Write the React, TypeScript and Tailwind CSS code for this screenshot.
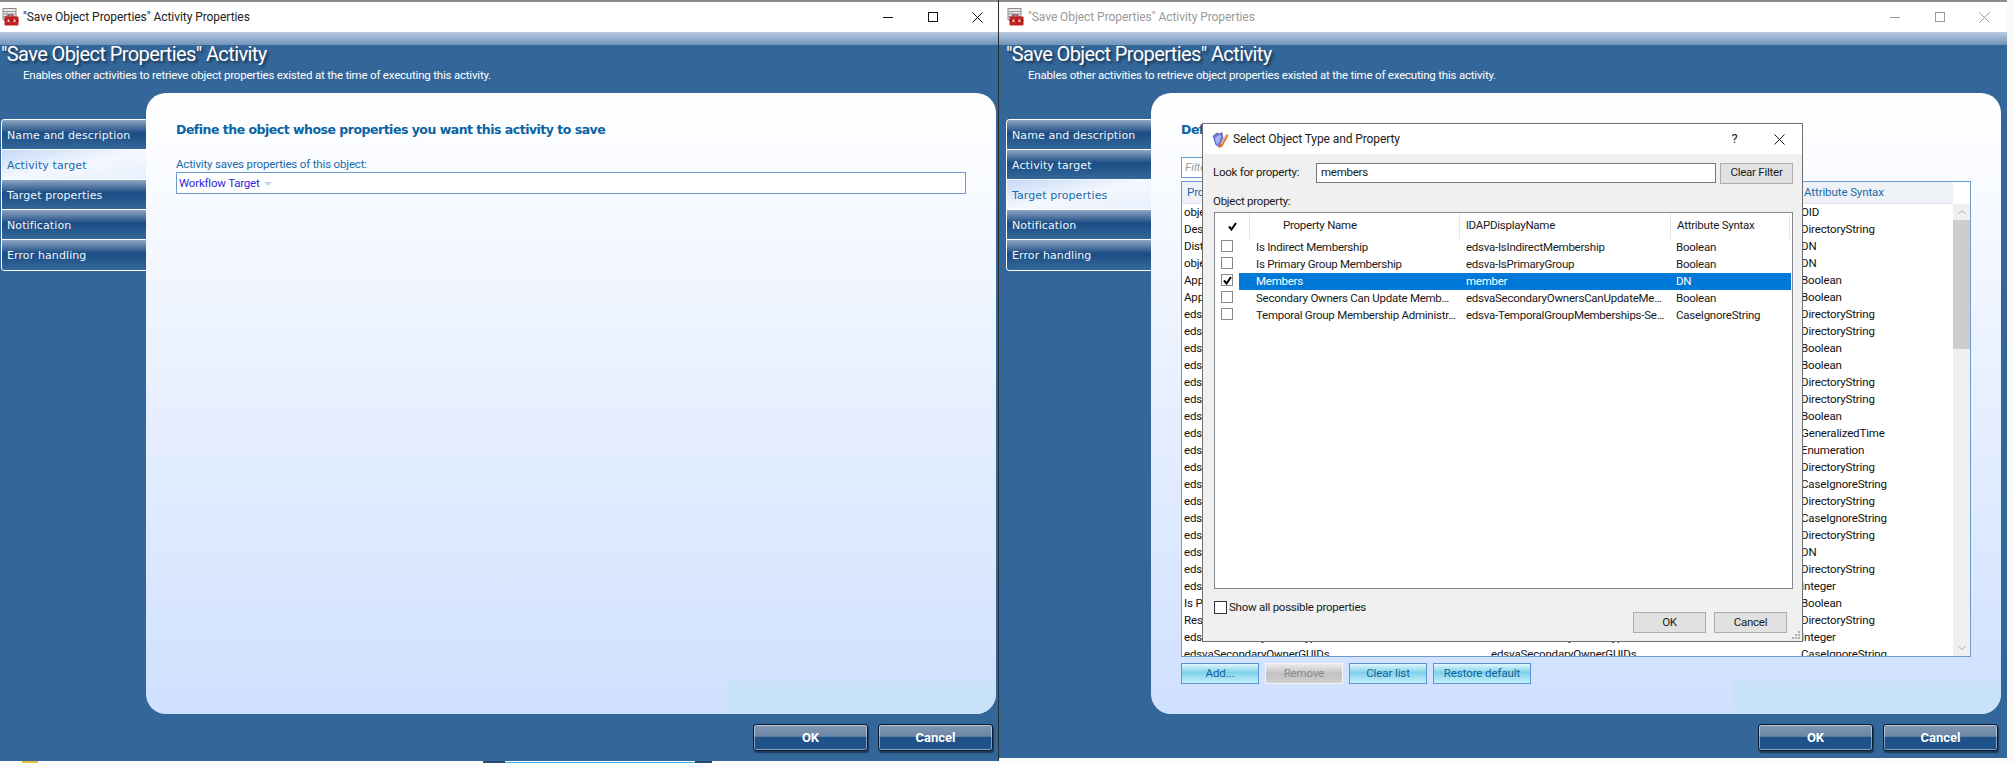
import React from "react";
import { ChevronDown, ChevronUp } from "lucide-react";

const tabs = ["Name and description", "Activity target", "Target properties", "Notification", "Error handling"];

const names = [
  "objectClass", "Description", "Distinguished Name", "objectGUID", "Approved", "Approval required",
  "edsvaApprovalState", "edsvaAssignedPolicies", "edsvaIsDeprovisioned", "edsvaIsRecycled", "edsvaManagedBy", "edsvaOwners",
  "edsvaIsTemporal", "edsvaLastLogon", "edsvaAccountType", "edsvaParentCanonicalName", "edsvaParentDN", "edsvaPath",
  "edsvaRoles", "edsvaScope", "edsvaSecondaryOwners", "edsvaSecondaryOwnerNames", "edsvaSecondaryOwnerCount",
  "Is Primary Owner", "Resultant Owners", "edsvaSecondaryOwnerType", "edsvaSecondaryOwnerGUIDs",
];

const syntaxes = [
  "OID", "DirectoryString", "DN", "DN", "Boolean", "Boolean", "DirectoryString", "DirectoryString", "Boolean",
  "Boolean", "DirectoryString", "DirectoryString", "Boolean", "GeneralizedTime", "Enumeration", "DirectoryString",
  "CaseIgnoreString", "DirectoryString", "CaseIgnoreString", "DirectoryString", "DN", "DirectoryString", "Integer",
  "Boolean", "DirectoryString", "Integer", "CaseIgnoreString",
];

const dialogRows = [
  { name: "Is Indirect Membership", ldap: "edsva-IsIndirectMembership", syntax: "Boolean", on: false },
  { name: "Is Primary Group Membership", ldap: "edsva-IsPrimaryGroup", syntax: "Boolean", on: false },
  { name: "Members", ldap: "member", syntax: "DN", on: true },
  { name: "Secondary Owners Can Update Memb…", ldap: "edsvaSecondaryOwnersCanUpdateMe…", syntax: "Boolean", on: false },
  { name: "Temporal Group Membership Administr…", ldap: "edsva-TemporalGroupMemberships-Se…", syntax: "CaseIgnoreString", on: false },
];

function ToolboxIcon() {
  return (
    <svg width="17" height="18" viewBox="0 0 17 18">
      <rect x="1" y="0.5" width="13" height="11" fill="#e8e8e8" stroke="#8a8a8a" />
      <path d="M1 3.5h13M1 6h13M1 8.5h13M5 3.5v8" stroke="#9a9a9a" />
      <path d="M6 8.5v-1.5h5v1.5" fill="none" stroke="#7a1414" />
      <rect x="2.5" y="8.5" width="14" height="9" rx="1" fill="#c4201f" />
      <rect x="2.5" y="12" width="14" height="1" fill="#8a1212" />
      <rect x="5.5" y="11.5" width="2" height="2.5" fill="#f3d0c0" />
      <rect x="11.5" y="11.5" width="2" height="2.5" fill="#f3d0c0" />
    </svg>
  );
}

function FolderPenIcon() {
  return (
    <svg width="17" height="17" viewBox="0 0 17 17">
      <path d="M1 5l4-3 3 1 2-1.5 1 6-4 8-3-1.5z" fill="#6d79d8" stroke="#4a55b0" strokeWidth="0.7" />
      <path d="M3 7l4-3 2 .5-1 5-3 5z" fill="#aab4f0" />
      <path d="M8 14.5l6-11 2 1-6 11-3 1z" fill="#f07a20" stroke="#c85a10" strokeWidth="0.6" />
      <path d="M9 13l5-9" stroke="#ffffff" strokeWidth="0.8" />
    </svg>
  );
}

function CheckMark({ className }: { className: string }) {
  return (
    <svg width="9" height="9" viewBox="0 0 9 9" className={className}>
      <path d="M1 4.5l2.5 3L8 1" fill="none" stroke="currentColor" strokeWidth="2" />
    </svg>
  );
}

function CloseGlyph({ size }: { size: number }) {
  return (
    <svg width={size} height={size} viewBox="0 0 11 11">
      <path d="M0.5 0.5l10 10M10.5 0.5l-10 10" stroke="currentColor" strokeWidth="1" fill="none" />
    </svg>
  );
}

function Shell({
  title,
  active,
  inactive,
  className,
  children,
  overlay,
}: {
  title: string;
  active: number;
  inactive?: boolean;
  className: string;
  children: React.ReactNode;
  overlay?: React.ReactNode;
}) {
  const btn = "w-[45px] flex justify-center";
  return (
    <div className={"relative flex flex-col " + className}>
      <div className="h-[32px] shrink-0 border-t-2 border-t-[#8c8c8c] bg-white flex items-center">
        <div className={inactive ? "w-[29px] pl-[8px] shrink-0" : "w-[23px] pl-[2px] shrink-0"}>
          <ToolboxIcon />
        </div>
        <span className={inactive ? "text-[12px] tracking-[-0.06px] text-[#9a9a9a]" : "text-[12px] tracking-[-0.06px] text-[#222]"}>{title}</span>
        <div className={inactive ? "ml-auto flex items-center text-[#9a9a9a]" : "ml-auto -mr-[2px] flex items-center text-[#111]"}>
          <div className={btn}>
            <div className="w-[10px] h-px bg-current" />
          </div>
          <div className={btn}>
            <div className="w-[10px] h-[10px] border border-current" />
          </div>
          <div className={btn}>
            <CloseGlyph size={11} />
          </div>
        </div>
      </div>
      <div className="h-[13px] shrink-0 bg-gradient-to-b from-[#b8cbe0] to-[#7094ba]" />
      <div className={inactive ? "flex-1 flex flex-col bg-[#336699] pl-[7px]" : "flex-1 flex flex-col bg-[#336699] pl-[1px]"}>
        <div className="h-[48px] shrink-0 text-white">
          <div className="-mt-[2px] h-[22px] text-[20px] leading-[22px] tracking-[-0.6px] whitespace-nowrap [text-shadow:2px_2px_3px_rgba(0,0,0,0.55)]">
            "Save Object Properties" Activity
          </div>
          <div className="mt-[2px] pl-[22px] text-[11.5px] leading-[16px] tracking-[-0.2px]">
            Enables other activities to retrieve object properties existed at the time of executing this activity.
          </div>
        </div>
        <div className="flex h-[621px] shrink-0">
          <div className="w-[145px] shrink-0 pt-[26px]">
            <div className="rounded-l-[4px] border-t border-b border-l border-white overflow-hidden font-['DejaVu_Sans',sans-serif]">
              {tabs.map((t, i) =>
                i === active ? (
                  <div
                    key={t}
                    className="h-[30px] border-b border-white last:border-b-0 flex items-center pl-[5px] pt-[3px] text-[11px] tracking-[0.1px] text-[#1a6aa8] bg-gradient-to-br from-[#c4d8f6] via-[#f4f8ff] to-[#e8f0fd]"
                  >
                    {t}
                  </div>
                ) : (
                  <div
                    key={t}
                    className="h-[30px] border-b border-white last:border-b-0 flex items-center pl-[5px] pt-[3px] text-[11px] tracking-[0.1px] text-[#f2f6fb] bg-gradient-to-b from-[#8ea6c2] via-[#1b4d85] via-45% to-[#346799]"
                  >
                    {t}
                  </div>
                ),
              )}
            </div>
          </div>
          <div className="relative w-[850px] shrink-0 rounded-[20px] bg-gradient-to-b from-white to-[#cfe0ff] pl-[30px] pt-[29px] overflow-hidden">
            <div className="absolute right-0 bottom-0 w-[268px] h-[33px] bg-[#c8e2f8]" />
            <div className="relative text-[12.5px] leading-[16px] font-bold text-[#0a63a3] font-['DejaVu_Sans',sans-serif] tracking-[-0.5px]">
              Define the object whose properties you want this activity to save
            </div>
            <div className="relative">{children}</div>
          </div>
        </div>
        <div className="flex-1 flex items-start gap-[10px] pt-[10px] pl-[752px]">
          <WinButton label="OK" />
          <WinButton label="Cancel" />
        </div>
      </div>
      {overlay}
    </div>
  );
}

function WinButton({ label }: { label: string }) {
  return (
    <div className="w-[115px] h-[27px] rounded-[3px] border border-[#0c1c30] shadow-[inset_0_0_0_1px_rgba(255,255,255,0.45),1px_2px_1px_#1c3a60] bg-gradient-to-b from-[#8098b2] via-[#6b87a6] via-45% to-[#1f5288] to-50% flex items-center justify-center text-white text-[13px] font-bold">
      {label}
    </div>
  );
}

function LeftBody() {
  return (
    <div className="pt-[18px]">
      <div className="text-[11.5px] leading-[16px] tracking-[-0.16px] text-[#1a6aa8]">Activity saves properties of this object:</div>
      <div className="w-[790px] h-[22px] border border-[#6c9bd0] bg-white flex items-center pl-[2px] pt-[1px] text-[11.5px] tracking-[-0.2px] text-[#2a2ae0]">
        Workflow Target
        <span className="ml-[4px] mt-[1px] border-x-[4px] border-x-transparent border-t-[4px] border-t-[#c4d4ee]" />
      </div>
    </div>
  );
}

function RightBody() {
  return (
    <div className="pt-[19px]">
      <div className="w-[600px] h-[21px] border border-[#6c9bd0] bg-white flex items-center pl-[3px] text-[11.5px] italic text-[#999]">
        Filter
      </div>
      <div className="mt-[3px] w-[790px] h-[476px] border border-[#6c9bd0] bg-white flex overflow-hidden">
        <div className="flex-1 overflow-hidden">
          <div className="h-[22px] grid grid-cols-[309px_312px_1fr] items-center bg-[#eef2f6] border-b border-[#dfe5ec] text-[11.5px] tracking-[-0.1px] text-[#1a6aa8]">
            <div className="pl-[5px]">Property Name</div>
            <div className="pl-[5px]">LDAP Display Name</div>
            <div className="pl-[1px]">Attribute Syntax</div>
          </div>
          {names.map((n, i) => (
            <div key={i} className="h-[17px] leading-[17px] grid grid-cols-[309px_310px_1fr] text-[11.5px] tracking-[-0.15px] text-[#111] whitespace-nowrap">
              <div className="pl-[2px]">{n}</div>
              <div>{n}</div>
              <div>{syntaxes[i]}</div>
            </div>
          ))}
        </div>
        <div className="w-[17px] flex flex-col bg-[#f0f0f0]">
          <div className="h-[22px] shrink-0 bg-white" />
          <div className="h-[16px] shrink-0 flex items-center justify-center text-[#a8a8a8]">
            <ChevronUp size={12} />
          </div>
          <div className="h-[129px] shrink-0 bg-[#cdcdcd]" />
          <div className="flex-1" />
          <div className="h-[16px] shrink-0 flex items-center justify-center text-[#a8a8a8]">
            <ChevronDown size={12} />
          </div>
        </div>
      </div>
      <div className="mt-[6px] flex gap-[6px] text-[11.5px] tracking-[-0.1px]">
        <CyanButton label="Add..." w="w-[78px]" />
        <div className="w-[78px] h-[21px] border border-[#f4f4f4] bg-gradient-to-b from-[#ececec] via-[#c2c2c2] via-50% to-[#cfcfcf] flex items-center justify-center text-[#8a8a8a]">
          Remove
        </div>
        <CyanButton label="Clear list" w="w-[78px]" />
        <CyanButton label="Restore default" w="w-[98px]" />
      </div>
    </div>
  );
}

function CyanButton({ label, w }: { label: string; w: string }) {
  return (
    <div className={"h-[21px] border border-[#5a94d4] bg-gradient-to-b from-[#e2f6fc] via-[#7fd2ea] via-45% to-[#c4f0fa] flex items-center justify-center text-[#14629c] " + w}>
      {label}
    </div>
  );
}

function Dialog() {
  const box = "w-[12px] h-[12px] border border-[#8a8a8a] bg-white flex items-center justify-center";
  return (
    <div className="absolute left-[203px] top-[123px] w-[601px] h-[519px] border border-[#707070] bg-[#f0f0f0] flex flex-col text-[11.5px] tracking-[-0.25px] text-[#1a1a1a]">
      <div className="h-[30px] shrink-0 bg-white flex items-center pl-[9px]">
        <FolderPenIcon />
        <span className="ml-[4px] text-[12px] tracking-[-0.1px]">Select Object Type and Property</span>
        <span className="ml-auto text-[13px] w-[45px] text-center">?</span>
        <span className="w-[45px] flex justify-center">
          <CloseGlyph size={11} />
        </span>
      </div>
      <div className="flex items-center h-[38px] shrink-0 pl-[10px]">
        <span className="w-[103px]">Look for property:</span>
        <div className="w-[400px] h-[20px] border border-[#777] bg-white flex items-center pl-[4px]">members</div>
        <div className="ml-[4px] w-[73px] h-[21px] border border-[#adadad] bg-[#e1e1e1] flex items-center justify-center">Clear Filter</div>
      </div>
      <div className="pl-[10px] h-[16px] leading-[16px] shrink-0 mt-[1px]">Object property:</div>
      <div className="ml-[11px] mt-[3px] w-[579px] h-[377px] shrink-0 border border-[#828790] bg-white flex flex-col">
        <div className="h-[26px] shrink-0 flex items-center">
          <div className="w-[35px] h-[25px] flex items-center justify-center pl-[1px] border-r border-[#e5e5e5]">
            <CheckMark className="text-black" />
          </div>
          <div className="w-[210px] h-[25px] flex items-center pl-[33px] border-r border-[#e5e5e5]">Property Name</div>
          <div className="w-[211px] h-[25px] flex items-center pl-[6px] border-r border-[#e5e5e5]">lDAPDisplayName</div>
          <div className="w-[119px] h-[25px] flex items-center pl-[6px] border-r border-[#e5e5e5]">Attribute Syntax</div>
        </div>
        {dialogRows.map((r) => (
          <div key={r.name} className="h-[17px] leading-[17px] shrink-0 flex">
            <div className="w-[24px] pl-[6px] pt-[1px] shrink-0">
              <div className={box}>{r.on && <CheckMark className="text-black" />}</div>
            </div>
            <div className={r.on ? "flex-1 mr-[1px] grid grid-cols-[221px_210px_1fr] bg-[#0078d7] text-white" : "flex-1 mr-[1px] grid grid-cols-[221px_210px_1fr]"}>
              <div className="pl-[17px] whitespace-nowrap overflow-hidden">{r.name}</div>
              <div className="pl-[6px] whitespace-nowrap overflow-hidden">{r.ldap}</div>
              <div className="pl-[6px] whitespace-nowrap overflow-hidden">{r.syntax}</div>
            </div>
          </div>
        ))}
      </div>
      <div className="flex-1 relative pl-[11px] pt-[10px]">
        <div className="flex items-center">
          <div className="w-[13px] h-[13px] border border-[#333] bg-white" />
          <span className="ml-[2px]">Show all possible properties</span>
        </div>
        <div className="absolute left-[430px] top-[23px] flex gap-[8px]">
          <div className="w-[73px] h-[21px] border border-[#adadad] bg-[#e1e1e1] flex items-center justify-center">OK</div>
          <div className="w-[73px] h-[21px] border border-[#adadad] bg-[#e1e1e1] flex items-center justify-center">Cancel</div>
        </div>
        <div className="absolute right-[2px] bottom-[2px] grid grid-cols-3 gap-[1px]">
          {[0, 0, 1, 0, 1, 1, 1, 1, 1].map((on, i) => (
            <div key={i} className={on ? "w-[2px] h-[2px] bg-[#b0b0b0]" : "w-[2px] h-[2px]"} />
          ))}
        </div>
      </div>
    </div>
  );
}

export default function App() {
  const title = '"Save Object Properties" Activity Properties';
  return (
    <div className="w-[2014px] h-[763px] overflow-hidden bg-[#fafafa] font-['Roboto',sans-serif]">
      <div className="flex items-start h-[761px]">
        <Shell title={title} active={1} className="w-[999px] h-[761px] shrink-0 border-r border-r-[#2a2a2a]">
          <LeftBody />
        </Shell>
        <Shell title={title} active={2} inactive className="w-[1008px] h-[758px] shrink-0" overlay={<Dialog />}>
          <RightBody />
        </Shell>
      </div>
      <div className="h-[2px] flex items-end">
        <div className="ml-[22px] w-[16px] h-[2px] bg-[#e8c040]" />
        <div className="ml-[445px] w-[22px] h-[2px] bg-[#2a4a70]" />
        <div className="w-[190px] h-px bg-[#35b5ee]" />
        <div className="w-[17px] h-[2px] bg-[#2a4a70]" />
      </div>
    </div>
  );
}
